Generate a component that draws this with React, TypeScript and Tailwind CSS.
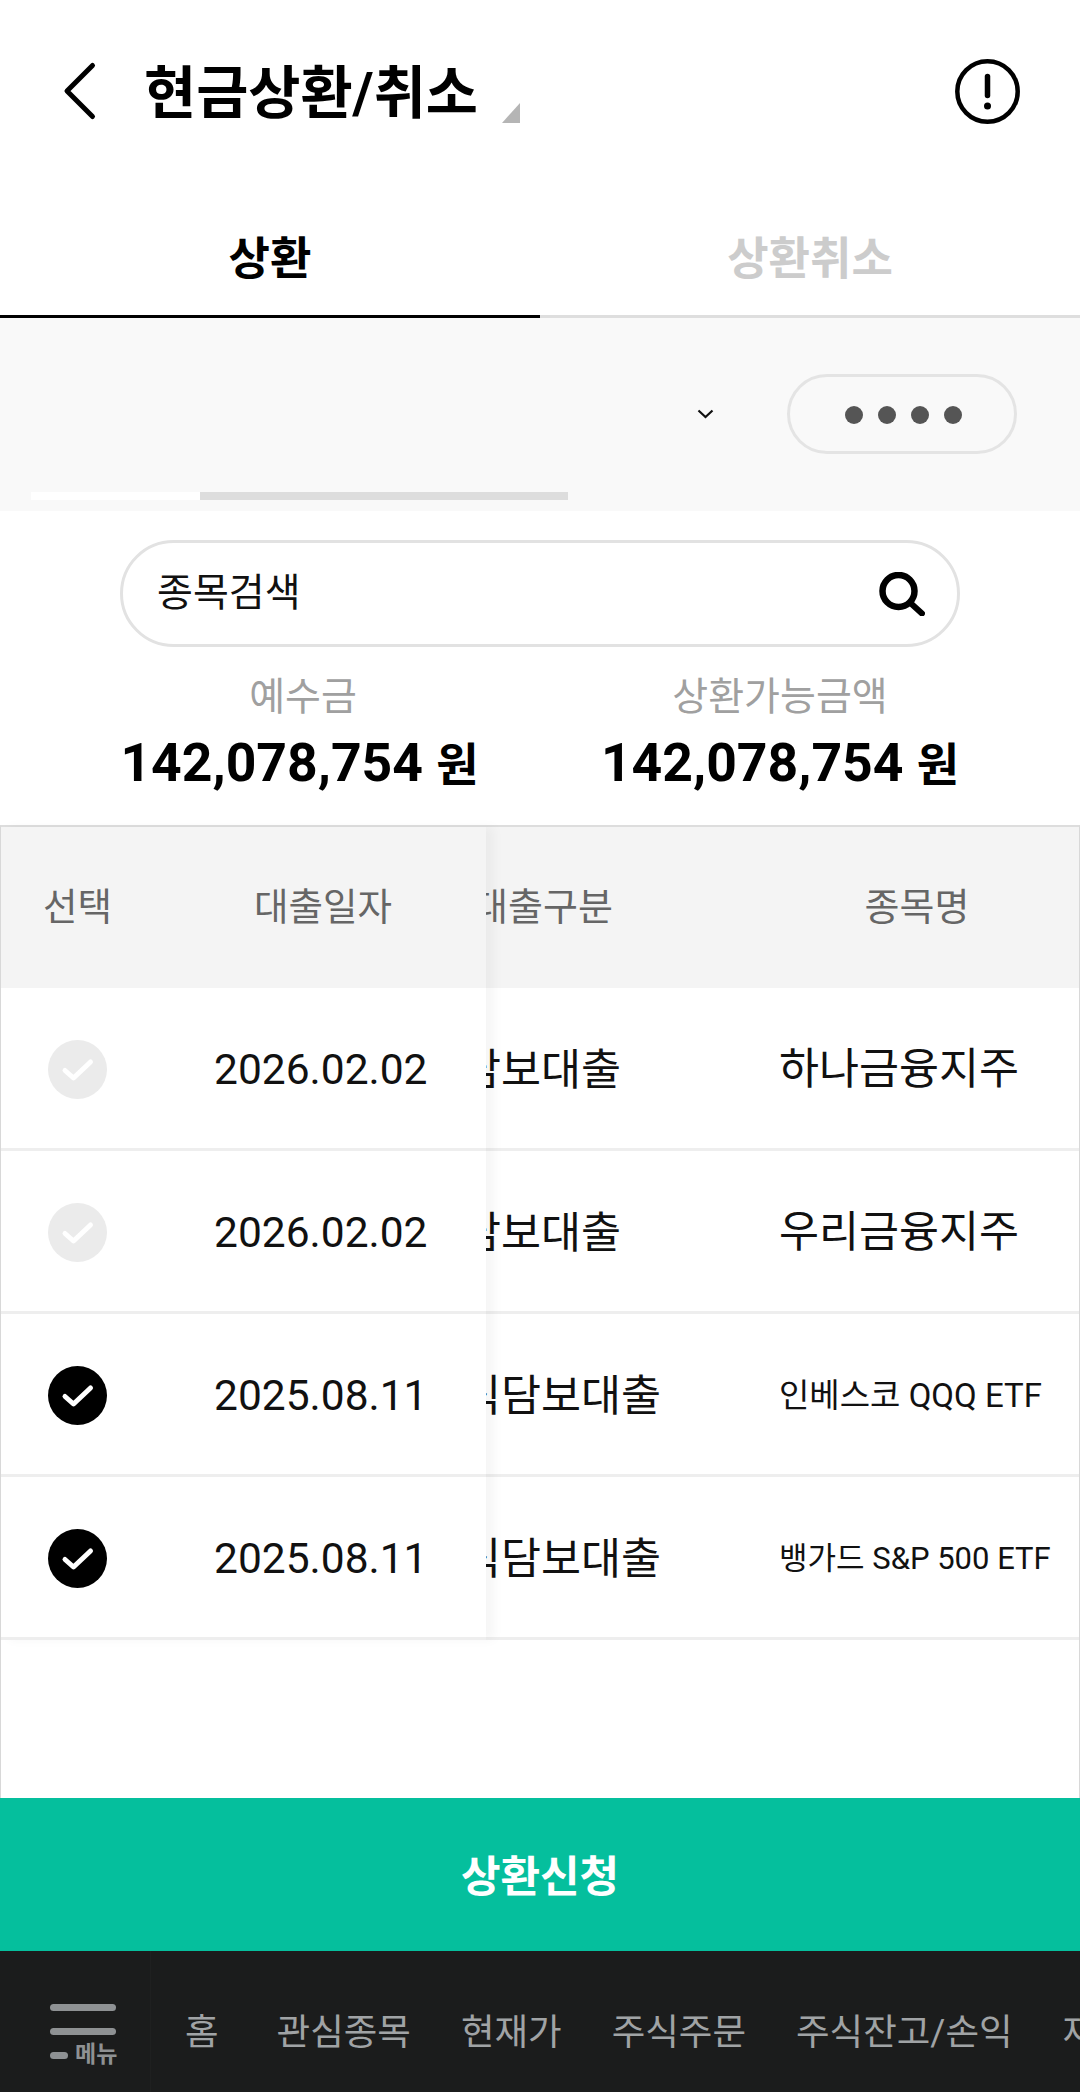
const loans = [
  { date: '2026.02.02', kind: '담보대출', name: '하나금융지주', nameSize: 'text-[43.5px]', enabled: false },
  { date: '2026.02.02', kind: '담보대출', name: '우리금융지주', nameSize: 'text-[43.5px]', enabled: false },
  { date: '2025.08.11', kind: '주식담보대출', name: '인베스코 QQQ ETF', nameSize: 'text-[33px]', enabled: true },
  { date: '2025.08.11', kind: '주식담보대출', name: '뱅가드 S&P 500 ETF', nameSize: 'text-[31px]', enabled: true },
];

const navItems = ['홈', '관심종목', '현재가', '주식주문', '주식잔고/손익', '재무정보'];

const CheckMark = ({ enabled }: { enabled: boolean }) => (
  <svg width="59" height="59" viewBox="0 0 59 59">
    <circle cx="29.5" cy="29.5" r="29.5" fill={enabled ? '#000000' : '#ebebeb'} />
    <path
      d="M17 30.5 L25.5 38 L42.5 22"
      fill="none"
      stroke="#ffffff"
      strokeWidth="5"
      strokeLinecap="round"
      strokeLinejoin="round"
    />
  </svg>
);

const App = () => {
  return (
    <div className="flex h-[2092px] w-[1080px] flex-col overflow-hidden bg-white font-['Roboto','Noto_Sans_CJK_KR',sans-serif]">
      {/* header */}
      <header className="flex h-[185px] shrink-0 items-start justify-between pt-[59px] pr-[60px] pl-[62px]">
        <div className="flex items-start">
          <svg width="36" height="60" viewBox="0 0 36 60" className="mt-[2px]">
            <path
              d="M30.5 4.5 L5 30 L30.5 55.5"
              fill="none"
              stroke="#000"
              strokeWidth="5"
              strokeLinecap="round"
              strokeLinejoin="round"
            />
          </svg>
          <h1 className="mt-[-1px] ml-[46px] text-[56.7px] leading-[72px] font-bold text-black">현금상환/취소</h1>
          <span className="mt-[44px] ml-[24px] h-0 w-0 border-b-[20px] border-l-[18px] border-b-[#b5b5b5] border-l-transparent" />
        </div>
        <svg width="65" height="65" viewBox="0 0 65 65">
          <circle cx="32.5" cy="32.5" r="30.2" fill="none" stroke="#000" strokeWidth="4.5" />
          <path d="M32.5 17.5 V36.5" stroke="#000" strokeWidth="5.5" strokeLinecap="round" />
          <circle cx="32.5" cy="47" r="3.5" fill="#000" />
        </svg>
      </header>

      {/* tabs */}
      <div className="flex h-[133px] shrink-0">
        <div className="flex flex-1 items-center justify-center border-b-[3px] border-black pt-[20px] text-[45px] font-bold text-black">
          상환
        </div>
        <div className="flex flex-1 items-center justify-center border-b-[3px] border-[#dedede] pt-[20px] text-[45px] font-bold text-[#cccccc]">
          상환취소
        </div>
      </div>

      {/* account selector */}
      <div className="flex h-[193px] shrink-0 flex-col bg-[#f9f9f9]">
        <div className="flex flex-1 items-start justify-end pt-[56px] pr-[63px]">
          <svg width="17" height="10" viewBox="0 0 17 10" className="mt-[35px] mr-[73px]">
            <path d="M1.5 1.5 L8.5 8 L15.5 1.5" fill="none" stroke="#111" strokeWidth="2.2" />
          </svg>
          <div className="flex h-[80px] w-[230px] items-center justify-center gap-[15px] rounded-full border-[3px] border-[#e4e4e4] pt-[2px] pl-[3px]">
            <span className="h-[18px] w-[18px] rounded-full bg-[#555555]" />
            <span className="h-[18px] w-[18px] rounded-full bg-[#555555]" />
            <span className="h-[18px] w-[18px] rounded-full bg-[#555555]" />
            <span className="h-[18px] w-[18px] rounded-full bg-[#555555]" />
          </div>
        </div>
        <div className="mb-[11px] ml-[31px] flex h-[8px] w-[537px]">
          <div className="w-[169px] bg-white" />
          <div className="flex-1 bg-[#dddddd]" />
        </div>
      </div>

      {/* search */}
      <div className="shrink-0 px-[120px] pt-[29px]">
        <div className="flex h-[107px] items-center justify-between rounded-full border-[3px] border-[#e2e2e2] pr-[32px] pl-[34px]">
          <span className="text-[39px] text-[#111111]">종목검색</span>
          <svg width="46" height="44" viewBox="0 0 46 44">
            <circle cx="19.5" cy="19" r="16" fill="none" stroke="#000" strokeWidth="6.5" />
            <path d="M32 31.5 L43 41.5" stroke="#000" strokeWidth="6" strokeLinecap="round" />
          </svg>
        </div>
      </div>

      {/* balances */}
      <div className="flex h-[178px] shrink-0 pt-[25px]">
        <div className="flex w-[602px] flex-col items-center pl-[4px]">
          <span className="text-[39px] leading-[50px] text-[#a0a0a0]">예수금</span>
          <span className="mt-[8px] mr-[7px] text-[53.5px] leading-[66px] font-bold whitespace-nowrap text-black">
            142,078,754 <span className="text-[46px]">원</span>
          </span>
        </div>
        <div className="flex w-[356px] flex-col items-center">
          <span className="text-[39px] leading-[50px] text-[#a0a0a0]">상환가능금액</span>
          <span className="mt-[8px] text-[53.5px] leading-[66px] font-bold whitespace-nowrap text-black">
            142,078,754 <span className="text-[46px]">원</span>
          </span>
        </div>
      </div>

      <div className="flex min-h-0 flex-1 border-x border-t-[2px] border-x-[#d8d8d8] border-t-[#dddddd]">
        <div className="relative z-10 w-[485px] shrink-0 self-start shadow-[8px_0_10px_rgba(0,0,0,0.04)]">
          <div className="flex h-[161px] items-center bg-[#f4f4f4] text-[37.5px] text-[#666666]">
            <span className="w-[153px] text-center">선택</span>
            <span className="ml-[63px] w-[212px] text-center whitespace-nowrap">대출일자</span>
          </div>
          {loans.map((loan, i) => (
            <div key={i} className="flex h-[163px] items-center border-b-[3px] border-[#eeeeee] bg-white pt-[2px]">
              <div className="flex w-[153px] justify-center">
                <CheckMark enabled={loan.enabled} />
              </div>
              <span className="mt-[2px] ml-[60px] text-[42.5px] text-[#111111]">{loan.date}</span>
            </div>
          ))}
        </div>
        <div className="min-w-0 flex-1 overflow-hidden">
          <div className="ml-[-65px] w-[800px]">
            <div className="flex h-[161px] items-center bg-[#f4f4f4] text-[38px] text-[#666666]">
              <span className="w-[244px] text-center">대출구분</span>
              <span className="ml-[182px] w-[140px] text-center">종목명</span>
            </div>
            {loans.map((loan, i) => (
              <div key={i} className="flex h-[163px] items-center border-b-[3px] border-[#eeeeee] pt-[2px]">
                <span className="mt-[4px] w-[240px] text-center text-[43.5px] whitespace-nowrap text-[#111111]">
                  {loan.kind}
                </span>
                <span className={`mt-[2px] ml-[118px] whitespace-nowrap text-[#111111] ${loan.nameSize}`}>
                  {loan.name}
                </span>
              </div>
            ))}
          </div>
        </div>
      </div>

      {/* submit */}
      <button className="flex h-[153px] shrink-0 items-center justify-center bg-[#05bf9d] pt-[6px] text-[43px] font-bold text-white">
        상환신청
      </button>

      {/* bottom menu */}
      <nav className="flex h-[141px] shrink-0 items-start overflow-hidden bg-[#1b1c1c]">
        <div className="flex h-full w-[151px] shrink-0 flex-col border-r border-[#1f2020] pt-[53px] pl-[50px]">
          <span className="h-[7px] w-[66px] rounded-full bg-[#8e9193]" />
          <span className="mt-[17px] h-[7px] w-[66px] rounded-full bg-[#8e9193]" />
          <div className="mt-[7px] flex h-[26px] items-center">
            <span className="h-[7px] w-[18px] rounded-full bg-[#8e9193]" />
            <span className="ml-[7px] text-[23px] leading-[26px] font-bold text-[#8e9193]">메뉴</span>
          </div>
        </div>
        <div className="flex h-full items-center gap-[50px] pt-[24px] pl-[34px] text-[36.5px] whitespace-nowrap text-[#a0a3a5]">
          {navItems.map((item, i) => (
            <span key={item} className={i === 0 ? 'mr-[8px]' : ''}>
              {item}
            </span>
          ))}
        </div>
      </nav>
    </div>
  );
};

export default App;
